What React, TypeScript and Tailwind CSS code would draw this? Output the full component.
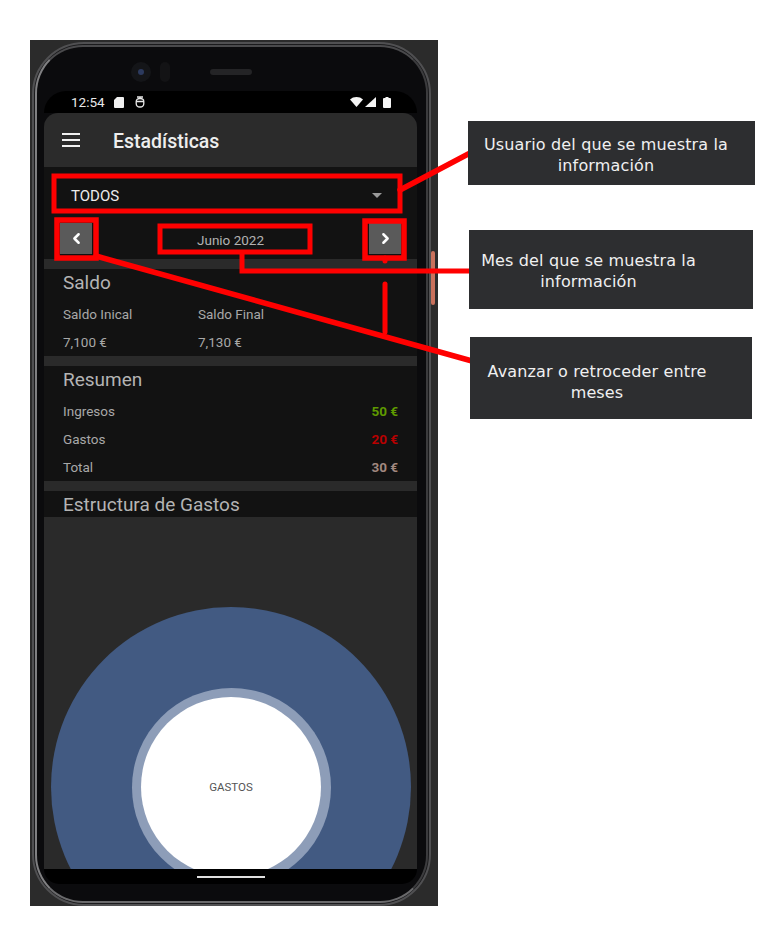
import React from 'react';
import { ChevronLeft, ChevronRight } from 'lucide-react';

const Heading = ({ children }: { children: React.ReactNode }) => (
  <h2 className="pt-[1px] text-[19px] leading-[26px] text-[#b4b4b4]">{children}</h2>
);

const Row = ({ label, value, color }: { label: string; value: string; color: string }) => (
  <div className="flex h-[28px] items-center justify-between text-[13.500px] text-[#a8a8a8]">
    <span>{label}</span>
    <span className={`font-bold ${color}`}>{value}</span>
  </div>
);

const StatusBar = () => (
  <div className="flex h-[22px] items-center justify-between rounded-t-[26px] bg-black pl-[27px] pr-[26px] text-[13.500px] text-[#e8e8e8]">
    <div className="flex items-center">
      <span>12:54</span>
      {/* sd card */}
      <svg className="ml-[9px]" width="10" height="11" viewBox="0 0 10 11">
        <path d="M3 0h6a1 1 0 0 1 1 1v9a1 1 0 0 1-1 1H1a1 1 0 0 1-1-1V3z" fill="#f0f0f0" />
      </svg>
      {/* mouse-like notification icon */}
      <svg className="ml-[11px]" width="10" height="12" viewBox="0 0 10 12" fill="none" stroke="#e8e8e8" strokeWidth="1.300">
        <path d="M2 1h6M1 5.500h8M1.200 5.500c0-2 1.500-3 3.800-3s3.800 1 3.800 3v2c0 2-1.500 3.500-3.800 3.500s-3.800-1.500-3.800-3.500z" />
      </svg>
    </div>
    <div className="flex items-center">
      <svg width="13" height="10" viewBox="0 0 13 10">
        <path d="M0 2.500C3.500-.8 9.500-.8 13 2.500L6.500 10z" fill="#f5f5f5" />
      </svg>
      <svg className="ml-[2px]" width="11" height="10" viewBox="0 0 11 10">
        <path d="M11 0v10H0z" fill="#f5f5f5" />
      </svg>
      <svg className="ml-[7px]" width="8" height="11" viewBox="0 0 8 11">
        <path d="M2.500 0h3v1H7a1 1 0 0 1 1 1v8a1 1 0 0 1-1 1H1a1 1 0 0 1-1-1V2a1 1 0 0 1 1-1h1.500z" fill="#f5f5f5" />
      </svg>
    </div>
  </div>
);

const Screen = () => (
  <div className="font-['Roboto',sans-serif]">
    <StatusBar />
    <div className="flex h-[54px] items-center rounded-t-[14px] bg-[#2b2b2b] pl-[18px] text-white">
      <svg width="18" height="14" viewBox="0 0 18 14" fill="#f0f0f0">
        <rect y="0" width="18" height="2" />
        <rect y="6" width="18" height="2" />
        <rect y="12" width="18" height="2" />
      </svg>
      <span className="ml-[33px] pt-[4px] text-[19.500px] font-medium text-[#eeeeee]">Estadísticas</span>
    </div>

    <div className="h-[92px] bg-[#121212]">
      <div className="flex h-[56px] items-center justify-between pl-[27px] pr-[35px] pt-[1px]">
        <span className="pt-[2px] text-[15px] text-[#ececec]">TODOS</span>
        <div className="h-0 w-0 border-x-[5px] border-t-[5px] border-x-transparent border-t-[#9a9a9a]" />
      </div>
      <div className="flex h-[31px] items-center justify-between pl-[16px] pr-[16px]">
        <button className="flex h-[31px] w-[32px] items-center justify-center bg-[#5a5a5a] text-white">
          <ChevronLeft size={17} strokeWidth={3.500} />
        </button>
        <span className="pt-[4px] text-[13.500px] text-[#b2b2b2]">Junio 2022</span>
        <button className="flex h-[31px] w-[32px] items-center justify-center bg-[#5a5a5a] text-white">
          <ChevronRight size={17} strokeWidth={3.500} />
        </button>
      </div>
    </div>

    <div className="h-[10px] bg-[#2a2a2a]" />
    <section className="h-[87px] bg-[#121212] pl-[19px]">
      <Heading>Saldo</Heading>
      <div className="flex pt-[4px] text-[13.500px] leading-[28px] text-[#a8a8a8]">
        <div className="w-[135px]">
          <div>Saldo Inical</div>
          <div>7,100 €</div>
        </div>
        <div>
          <div>Saldo Final</div>
          <div>7,130 €</div>
        </div>
      </div>
    </section>

    <div className="h-[10px] bg-[#2a2a2a]" />
    <section className="h-[115px] bg-[#121212] pl-[19px] pr-[19px]">
      <Heading>Resumen</Heading>
      <div className="pt-[4px]">
        <Row label="Ingresos" value="50 €" color="text-[#5f9a00]" />
        <Row label="Gastos" value="20 €" color="text-[#b80000]" />
        <Row label="Total" value="30 €" color="text-[#a1887f]" />
      </div>
    </section>

    <div className="h-[10px] bg-[#2a2a2a]" />
    <section className="h-[26px] bg-[#121212] pl-[19px]">
      <Heading>Estructura de Gastos</Heading>
    </section>

    <div className="flex h-[352px] justify-center overflow-hidden bg-[#2a2a2a] pl-[1px] pt-[90px]">
      <div className="flex h-[360px] w-[360px] shrink-0 items-center justify-center rounded-full bg-[#425a82]">
        <div className="flex h-[199px] w-[199px] items-center justify-center rounded-full bg-[#8d9db8]">
          <div className="flex h-[180px] w-[180px] items-center justify-center rounded-full bg-white pt-[2px] text-[11.500px] text-[#555555]">
            GASTOS
          </div>
        </div>
      </div>
    </div>

    <div className="flex h-[15px] justify-center rounded-b-[24px] bg-black pt-[7px]">
      <div className="h-[2px] w-[68px] bg-[#e0e0e0]" />
    </div>
  </div>
);

const Phone = () => (
  <div className="h-[866px] w-[408px] bg-[#2b2b2b] pl-[2px] pt-[2px]">
    <div className="h-[864px] w-[399px] rounded-[52px] border-2 border-[#505052] bg-[#1a1a1c] p-[1px]">
      <div className="h-full rounded-[48px] border-2 border-b-[#6a6a6c] border-l-[#808082] border-r-[#3c3c3e] border-t-[#4a4a4c] bg-[#0b0b0d] pl-[7px] pt-[44px]">
        <div className="w-[373px]">
          <div className="relative h-0">
            {/* front camera, sensor and speaker */}
            <div className="absolute left-[87px] top-[-29px] flex h-[20px] w-[20px] items-center justify-center rounded-full bg-[#141518]">
              <div className="h-[6px] w-[6px] rounded-full bg-[#2c3a5e]" />
            </div>
            <div className="absolute left-[116px] top-[-29px] h-[20px] w-[10px] rounded-full bg-[#131315]" />
            <div className="absolute left-[166px] top-[-22px] h-[6px] w-[42px] rounded-full bg-[#242426]" />
          </div>
          <Screen />
        </div>
      </div>
    </div>
  </div>
);

const callouts = [
  { top: 'top-[121px] left-[468px] w-[287px] h-[64px]', pad: 'pt-[13px] w-[276px]', a: 'Usuario del que se muestra la', b: 'información' },
  { top: 'top-[230px] left-[469px] w-[284px] h-[79px]', pad: 'pt-[20px] w-[239px]', a: 'Mes del que se muestra la', b: 'información' },
  { top: 'top-[337px] left-[470px] w-[282px] h-[82px]', pad: 'pt-[24px] w-[254px]', a: 'Avanzar o retroceder entre', b: 'meses' },
];

const App: React.FC = () => {
  return (
    <div className="relative h-[928px] w-[780px] overflow-hidden bg-white pl-[30px] pt-[40px]">
      <Phone />

      {/* volume / power button on the side of the phone */}
      <div className="absolute left-[431px] top-[251px] h-[54px] w-[4px] rounded-full bg-[#c9715c]" />

      {/* red annotations drawn over the screenshot */}
      <svg className="absolute left-0 top-0" width="780" height="928" fill="none" stroke="#ff0000" strokeWidth="5" strokeLinecap="round">
        <rect x="54" y="176" width="346" height="35" />
        <rect x="57" y="220" width="39" height="38" strokeWidth="5.500" />
        <rect x="365" y="221" width="39" height="37" strokeWidth="5.500" />
        <rect x="160" y="226" width="150" height="26" />
        <path d="M400 190L472 152" strokeWidth="5.500" />
        <path d="M242 254V271H472" />
        <path d="M96 256L472 361" strokeWidth="5.500" />
        <path d="M385 258V261" />
        <path d="M385 284V332" />
      </svg>

      {callouts.map((c) => (
        <div key={c.a} className={`absolute bg-[#2d2e30] font-['DejaVu_Sans',sans-serif] text-[16px] leading-[21px] tracking-[0.150px] text-[#f0f0f0] ${c.top}`}>
          <div className={`text-center whitespace-nowrap ${c.pad}`}>
            {c.a}
            <br />
            {c.b}
          </div>
        </div>
      ))}
    </div>
  );
};

export default App;
